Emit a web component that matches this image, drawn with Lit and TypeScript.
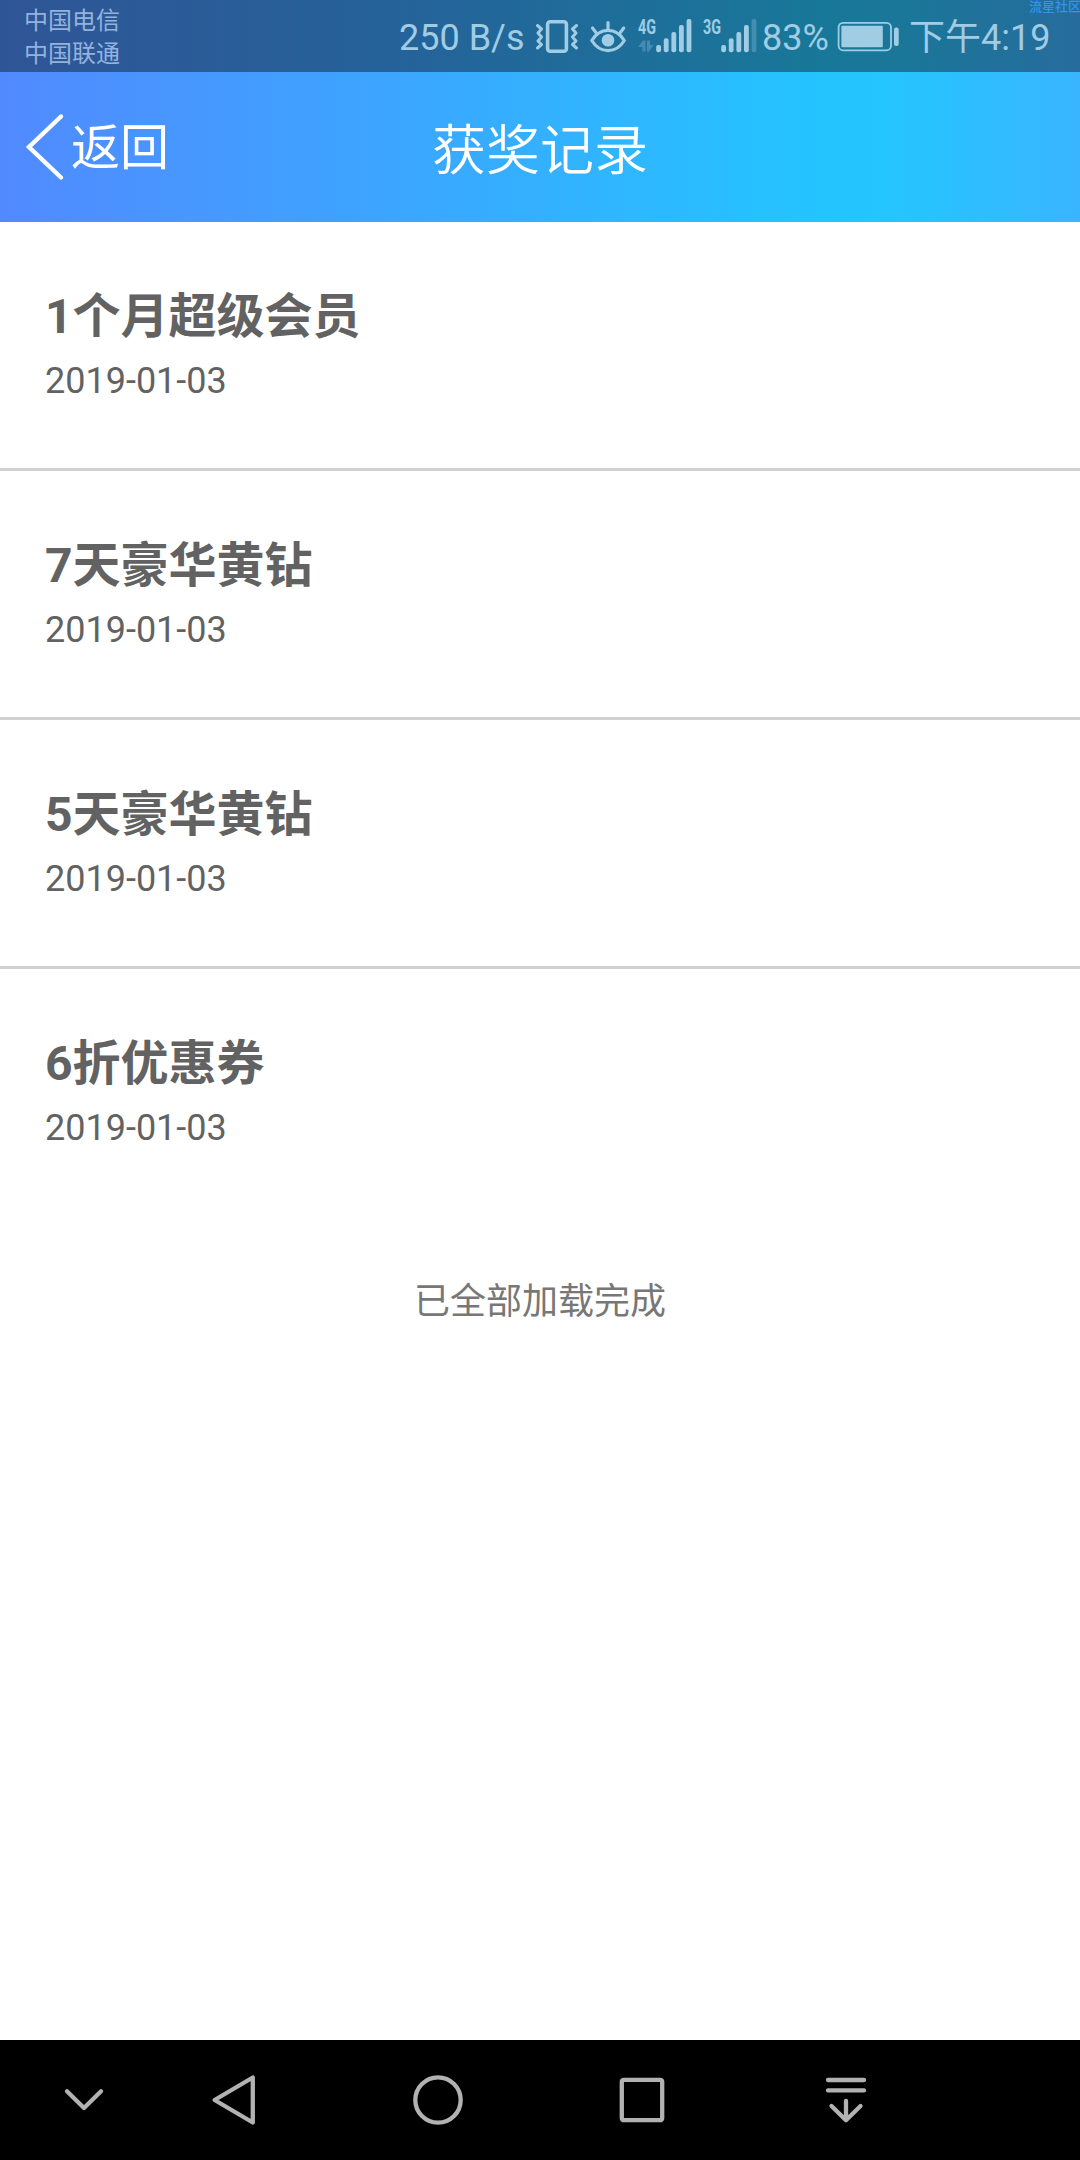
import { LitElement, html, css, svg } from "lit";
import { customElement, property } from "lit/decorators.js";

const FONT = css`Roboto, "Noto Sans CJK SC", sans-serif`;

interface Award {
  name: string;
  date: string;
}

const AWARDS: Award[] = [
  { name: "1个月超级会员", date: "2019-01-03" },
  { name: "7天豪华黄钻", date: "2019-01-03" },
  { name: "5天豪华黄钻", date: "2019-01-03" },
  { name: "6折优惠券", date: "2019-01-03" },
];

const BAR_TOPS = [45, 38.3, 32, 25, 19];

@customElement("signal-icon")
class SignalIcon extends LitElement {
  @property() network = "4G";
  @property({ type: Number }) level = 5;
  @property({ type: Boolean }) traffic = false;

  static styles = css`
    :host { display: block; width: 54px; height: 72px; }
    svg { display: block; fill: currentColor; }
    .network { font: 700 20px ${FONT}; }
    .faded { opacity: 0.3; }
  `;

  render() {
    return html`<svg width="54" height="72" viewBox="0 0 54 72">
      <text class="network" x="0" y="33.6" textLength="18" lengthAdjust="spacingAndGlyphs">${this.network}</text>
      ${this.traffic
        ? svg`<path class="faded" d="M0 47 L5 40.5 H7.5 V51.5 H4.5 V47 Z M9 40.5 H12 V45 H15.5 L11 51.5 H9 Z"/>`
        : null}
      ${BAR_TOPS.map(
        (top, i) => svg`<rect class=${i < this.level ? "bar" : "faded"} x=${18.2 + i * 7.6} y=${top}
          width="4.8" height=${52.3 - top} rx="2"/>`
      )}
    </svg>`;
  }
}

@customElement("status-bar")
class StatusBar extends LitElement {
  static styles = css`
    :host {
      display: flex;
      height: 72px;
      position: relative;
      overflow: hidden;
      color: #a0cce4;
      font: 36px/72px ${FONT};
      background: linear-gradient(90deg, #2f5596 0, #25629a 36%, #187899 76%, #1a7799 83%, #266c9d 100%);
    }
    .carriers {
      padding: 5px 0 0 24px;
      width: 399px;
      flex: none;
      box-sizing: border-box;
      font-size: 24px;
      line-height: 33px;
      color: #93b3de;
    }
    svg { display: block; flex: none; }
    .text { white-space: pre; padding-top: 2px; box-sizing: border-box; flex: none; }
    .speed { width: 137px; }
    .vibrate { width: 43px; margin-right: 11px; }
    .eye { width: 36px; margin-right: 12px; }
    .first { margin-right: 11px; }
    .second { margin-right: 5px; }
    .percent { width: 75px; }
    .battery { width: 62px; margin-right: 10px; }
    .watermark {
      position: absolute;
      top: -1px;
      left: 1029px;
      font-size: 13px;
      font-weight: 500;
      line-height: 15px;
      white-space: nowrap;
      color: #2f96ec;
    }
  `;

  render() {
    return html`
      <div class="carriers"><div>中国电信</div><div>中国联通</div></div>
      <div class="text speed">250 B/s</div>
      <svg class="vibrate" height="72" viewBox="536 0 43 72" fill="none" stroke="currentColor" stroke-linecap="round" stroke-linejoin="round">
        <rect x="547.6" y="21.7" width="18.8" height="29.6" rx="2.5" stroke-width="3.6"/>
        <path stroke-width="3" d="M537.5 25.5 L541.5 29 L538 33 L541.5 37 L538 41 L541.5 44.5 L537.5 48 M576.5 25.5 L572.5 29 L576 33 L572.5 37 L576 41 L572.5 44.5 L576.5 48"/>
      </svg>
      <svg class="eye" height="72" viewBox="590 0 36 72" fill="none" stroke="currentColor" stroke-linecap="round" stroke-width="3.2">
        <path d="M591.8 40.5 C600 27 616 27 624.3 40.5 C616 54 600 54 591.8 40.5 Z" stroke-linejoin="round"/>
        <path d="M608 22.5 V29 M592.5 28 L596.3 33 M623.7 28 L620 33"/>
        <circle cx="608" cy="40.3" r="6.3" fill="currentColor" stroke="none"/>
      </svg>
      <signal-icon class="first" network="4G" level="5" traffic></signal-icon>
      <signal-icon class="second" network="3G" level="4"></signal-icon>
      <div class="text percent">83%</div>
      <svg class="battery" height="72" viewBox="837 0 62 72" fill="currentColor">
        <rect x="838.6" y="22.9" width="52.4" height="27.4" rx="4.5" fill="none" stroke="currentColor" stroke-width="1.8"/>
        <rect x="841.4" y="25.8" width="41.4" height="21.4" rx="1"/>
        <rect x="894" y="27.5" width="4.7" height="18.5" rx="2"/>
      </svg>
      <div class="text">下午4:19</div>
      <div class="watermark">流星社区</div>
    `;
  }
}

@customElement("title-bar")
class TitleBar extends LitElement {
  static styles = css`
    :host {
      display: grid;
      grid-template-columns: 1fr auto 1fr;
      align-items: center;
      height: 150px;
      color: #fff;
      font: 49px/72px ${FONT};
      background: linear-gradient(90deg, #518aff 0, #3da4ff 34%, #23c5ff 77%, #25c5ff 82%, #39b5ff 100%);
    }
    .back { display: flex; align-items: center; padding-left: 24px; }
    .chevron { display: block; margin-right: 5px; }
    .label { padding-top: 3px; }
    .title { font-size: 54px; font-weight: 350; padding-top: 9px; }
  `;

  render() {
    return html`
      <div class="back">
        <svg class="chevron" width="42" height="72" viewBox="0 0 42 72" fill="none" stroke="#fff" stroke-width="4.4" stroke-linecap="round">
          <path d="M37 5.5 L5 36 L37 66.5"/>
        </svg>
        <span class="label">返回</span>
      </div>
      <div class="title">获奖记录</div>
      <div></div>
    `;
  }
}

@customElement("nav-bar")
class NavBar extends LitElement {
  static styles = css`
    :host {
      display: grid;
      grid-template-columns: 96px repeat(4, 204px);
      justify-items: center;
      align-items: center;
      height: 120px;
      padding-left: 36px;
      background: #000;
    }
    svg {
      display: block;
      fill: none;
      stroke: #b2b2b2;
      stroke-width: 4.3;
      stroke-linecap: round;
      stroke-linejoin: round;
    }
  `;

  render() {
    return html`
      <svg width="60" height="60" viewBox="0 0 60 60"><path d="M13 21.3 L30 38 L47 21.3"/></svg>
      <svg width="60" height="60" viewBox="0 0 60 60"><path d="M10.6 30 L48.8 7.5 V52.5 Z"/></svg>
      <svg width="60" height="60" viewBox="0 0 60 60"><circle cx="30" cy="30" r="22.7"/></svg>
      <svg width="60" height="60" viewBox="0 0 60 60"><rect x="9.8" y="9.8" width="40.4" height="40.4" rx="2"/></svg>
      <svg width="60" height="60" viewBox="0 0 60 60"><path d="M12 10 H48 M12 20.4 H48 M30 31 V50 M15.5 36 L30 50.3 L44.5 36"/></svg>
    `;
  }
}

@customElement("app-root")
class AppRoot extends LitElement {
  static styles = css`
    :host {
      display: flex;
      flex-direction: column;
      height: 2160px;
      background: #fff;
      color: #626262;
      font-family: ${FONT};
    }
    .content { flex: 1; }
    .row { height: 246px; box-sizing: border-box; padding: 62px 45px 0; }
    .row + .row { border-top: 3px solid #d0d0d0; height: 249px; }
    .name { font-size: 48px; line-height: 66px; font-weight: 700; }
    .date { font-size: 36px; line-height: 62px; }
    .end { text-align: center; font-size: 36px; line-height: 60px; padding-top: 57px; color: #777; }
  `;

  render() {
    return html`
      <status-bar></status-bar>
      <title-bar></title-bar>
      <div class="content">
        ${AWARDS.map(
          (a) => html`<div class="row">
            <div class="name">${a.name}</div>
            <div class="date">${a.date}</div>
          </div>`
        )}
        <div class="end">已全部加载完成</div>
      </div>
      <nav-bar></nav-bar>
    `;
  }
}
